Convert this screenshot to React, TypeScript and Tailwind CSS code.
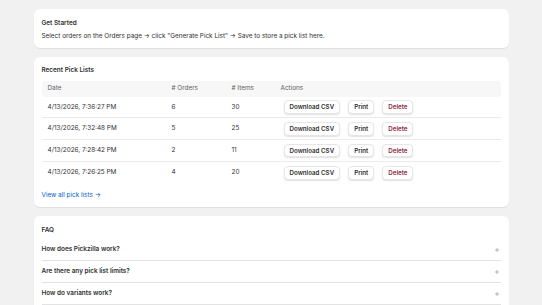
import { Plus } from "lucide-react";

const lists = [
  { date: "4/13/2026, 7:36:27 PM", orders: 6, items: 30 },
  { date: "4/13/2026, 7:32:48 PM", orders: 5, items: 25 },
  { date: "4/13/2026, 7:28:42 PM", orders: 2, items: 11 },
  { date: "4/13/2026, 7:26:25 PM", orders: 4, items: 20 },
];

const faqs = ["How does Pickzilla work?", "Are there any pick list limits?", "How do variants work?"];

const Card = ({ children }: { children: React.ReactNode }) => (
  <div className="bg-white rounded-[6px] shadow-[0_1px_1px_0_rgba(26,26,26,0.08)] px-[8px] pt-[9.5px] pb-[7px]">{children}</div>
);

const Button = ({ label, danger }: { label: string; danger?: boolean }) => (
  <button
    className={`h-[13.5px] px-[5px] rounded-[4px] bg-white border border-[#e6e6e6] shadow-[0_1px_1.5px_0_rgba(0,0,0,0.12)] text-[6.2px] font-semibold leading-none ${
      danger ? "text-[#8e1f3b]" : "text-[#303030]"
    }`}>
    {label}
  </button>
);

export default function App() {
  return (
    <div className="min-h-[305px] bg-[#f1f1f1] text-[#303030] font-['Inter',sans-serif] text-[6.4px] leading-[9px]">
      <div className="w-[475px] mx-auto pt-[9px] flex flex-col gap-[8.7px]">
        <Card>
          <div className="flex flex-col gap-[4.5px]">
            <p className="font-semibold">Get Started</p>
            <p>Select orders on the Orders page → click "Generate Pick List" → Save to store a pick list here.</p>
          </div>
        </Card>

        <Card>
          <p className="font-semibold">Recent Pick Lists</p>
          <div className="mt-[5.5px]">
            <div className="grid grid-cols-[124px_60px_49px_1fr] h-[16px] items-center bg-[#f7f7f7] rounded-[3px] text-[#616161]">
              <span className="pl-[6px]">Date</span>
              <span className="pl-[6px]"># Orders</span>
              <span className="pl-[6px]"># Items</span>
              <span className="pl-[6px]">Actions</span>
            </div>
            {lists.map((l, i) => (
              <div
                key={l.date}
                className={`grid grid-cols-[124px_60px_49px_1fr] h-[21.8px] items-center ${
                  i < lists.length - 1 ? "border-b border-[#ebebeb]" : ""
                }`}>
                <span className="pl-[6px]">{l.date}</span>
                <span className="pl-[6px]">{l.orders}</span>
                <span className="pl-[6px]">{l.items}</span>
                <div className="pl-[9px] flex gap-[8px]">
                  <Button label="Download CSV" />
                  <Button label="Print" />
                  <Button label="Delete" danger />
                </div>
              </div>
            ))}
          </div>
          <p className="mt-[7.5px] text-[#005bd3]">View all pick lists →</p>
        </Card>

        <Card>
          <p className="font-semibold">FAQ</p>
          <div className="mt-[4.5px]">
            {faqs.map((q) => (
              <div key={q} className="h-[22px] flex items-center justify-between border-b border-[#e3e3e3] pr-[1px]">
                <span className="font-semibold">{q}</span>
                <Plus size={6} strokeWidth={2} className="text-[#7a7a7a]" />
              </div>
            ))}
          </div>
        </Card>
      </div>
    </div>
  );
}
